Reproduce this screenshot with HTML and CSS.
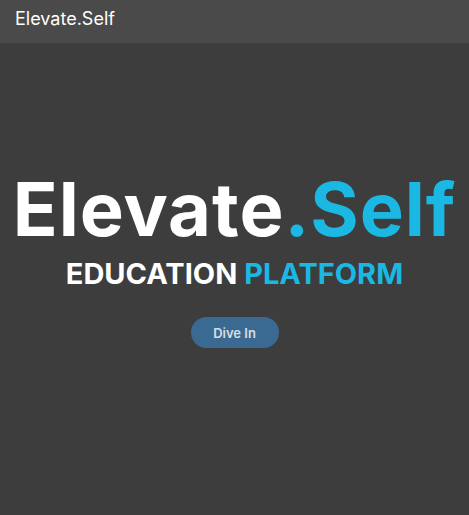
FILE: index.html
```html
<!DOCTYPE html>
<html>
<head>
<meta charset="utf-8">
<link rel="stylesheet" href="styles.css">
</head>
<body>
<header class="topbar"><span class="brand">Elevate.Self</span></header>
<main class="hero">
  <h1 class="title">Elevate<span class="accent">.Self</span></h1>
  <h2 class="subtitle">EDUCATION <span class="accent">PLATFORM</span></h2>
  <button class="cta">Dive In</button>
</main>
</body>
</html>
```
FILE: styles.css
```css
html, body { margin: 0; padding: 0; }
body {
  background: #3d3d3d;
  font-family: Inter, Roboto, "Liberation Sans", sans-serif;
  color: #fff;
  height: 515px;
}
.topbar {
  height: 43px;
  background: #4a4a4a;
  display: flex;
  align-items: center;
  padding-left: 15px;
}
.brand {
  font-family: Inter, Roboto, sans-serif;
  font-size: 18px;
  color: #fff;
  margin-top: -6px;
}
.hero {
  display: flex;
  flex-direction: column;
  align-items: center;
  padding-top: 128px;
}
.title {
  margin: 0;
  font-size: 74px;
  font-weight: 700;
  line-height: 76px;
  letter-spacing: 1px;
}
.accent { color: #1ab8e3; }
.subtitle {
  margin: 10px 0 0;
  font-size: 29px;
  font-weight: 700;
  line-height: 34px;
}
.cta {
  margin-top: 26px;
  width: 88px;
  height: 31px;
  border: none;
  border-radius: 16px;
  background: #3a6a92;
  color: #d8dde3;
  font-family: Inter, Roboto, sans-serif;
  font-size: 13px;
  font-weight: 600;
}
```
